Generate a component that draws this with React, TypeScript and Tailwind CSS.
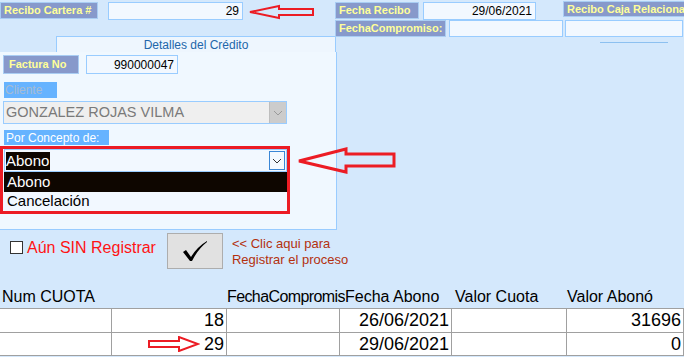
import React from "react";

const font = { fontFamily: '"Liberation Sans", Arial, sans-serif' };

function Label({ text, className }: { text: string; className: string }) {
  return (
    <div
      className={`flex items-center overflow-hidden whitespace-nowrap border border-[#a9cdf3] bg-[#8799cb] pl-[3px] text-[11px] font-bold text-[#ffff99] ${className}`}
    >
      {text}
    </div>
  );
}

function Input({ value, className }: { value?: string; className: string }) {
  return (
    <div
      className={`flex items-center justify-end border border-[#99ccff] bg-[#f2f8ff] pr-[3px] text-[12px] text-black ${className}`}
    >
      {value}
    </div>
  );
}

function Chevron({ color }: { color: string }) {
  return (
    <svg width="10" height="6" viewBox="0 0 10 6">
      <path d="M1 1 L5 5 L9 1" fill="none" stroke={color} strokeWidth="1" />
    </svg>
  );
}

function Cell({ children, w }: { children?: React.ReactNode; w: string }) {
  return (
    <div
      className={`flex h-full items-center justify-end border-r border-[#a0a0a0] pr-[2px] ${w}`}
    >
      {children}
    </div>
  );
}

export default function App() {
  return (
    <div
      className="relative h-[357px] w-[684px] overflow-hidden bg-[#d4e8fc]"
      style={font}
    >
      {/* top strip */}
      <div className="flex">
        <div className="w-[335px] shrink-0">
          <div className="flex items-start pt-[2px]">
            <Label text="Recibo Cartera #" className="h-[17px] w-[98px]" />
            <Input value="29" className="ml-[10px] h-[18px] w-[135px]" />
            <svg width="66" height="16" viewBox="0 0 66 16" className="ml-[6px] mt-[2px]">
              <path
                d="M1 8 L30 2 L30 5 L64 5 L64 11 L30 11 L30 14 Z"
                fill="none"
                stroke="#ec1c24"
                strokeWidth="2"
              />
            </svg>
          </div>
          <div className="ml-[56px] mt-[16px] flex h-[16px] w-[280px] items-center justify-center border border-b-0 border-[#99ccff] bg-[#eef6fe] text-[12px] text-[#2266aa]">
            Detalles del Crédito
          </div>
        </div>
        <div className="flex-1">
          <div className="flex items-start">
            <Label text="Fecha Recibo" className="mt-[2px] h-[17px] w-[84px]" />
            <Input value="29/06/2021" className="ml-[4px] mt-[2px] h-[18px] w-[113px]" />
            <Label text="Recibo Caja Relacionado" className="ml-[27px] mt-[1px] h-[16px] w-[130px] shrink-0" />
          </div>
          <div className="flex items-start">
            <Label text="FechaCompromiso:" className="h-[17px] w-[111px]" />
            <Input className="ml-[3px] h-[17px] w-[114px]" />
            <Input className="ml-[2px] h-[17px] w-[118px]" />
          </div>
          <div className="ml-[265px] mt-[5px] h-px w-[68px] bg-[#8cc0f0]" />
        </div>
      </div>

      {/* credit details panel */}
      <div className="h-[178px] w-[337px] border-r border-b border-[#99ccff] bg-[#f0f8ff]">
        <div className="flex items-start pl-[3px] pt-[3px]">
          <Label text="Factura No" className="h-[19px] w-[76px] pl-[5px]" />
          <Input value="990000047" className="ml-[7px] h-[19px] w-[92px]" />
        </div>
        <div className="ml-[4px] mt-[8px] flex h-[16px] w-[53px] items-center bg-[#66b3ff] pl-[1px] text-[12px] text-[#a6bcd2]">
          Cliente
        </div>
        <div className="ml-[3px] mt-[3px] flex h-[23px] w-[284px] items-center border border-[#99ccff] bg-[#efefef]">
          <span className="flex-1 pl-[2px] text-[14.5px] text-[#7a7a7a]">
            GONZALEZ ROJAS VILMA
          </span>
          <div className="flex h-full w-[17px] items-center justify-center border-l border-[#bdbdbd] bg-[#cccccc]">
            <Chevron color="#9a9a9a" />
          </div>
        </div>
        <div className="ml-[4px] mt-[6px] flex h-[15px] w-[105px] items-center bg-[#66b3ff] pl-[2px] text-[12px] text-white">
          Por Concepto de:
        </div>
        <div className="mt-[1px] h-[68px] w-[290px] border-[3px] border-[#ec1c24] pl-px">
          <div className="flex h-[23px] w-[283px] items-center border border-[#99ccff] bg-[#f2f8ff]">
            <span className="ml-[1px] bg-[#0e0600] pr-[1px] text-[15px] leading-[18px] text-white">
              Abono
            </span>
            <div className="flex-1" />
            <div className="mr-px flex h-[19px] w-[16px] items-center justify-center border border-[#3a86d6] bg-[#f4f9ff]">
              <Chevron color="#333333" />
            </div>
          </div>
          <div className="w-[283px] bg-[#f2f8ff] text-[15px]">
            <div className="flex h-[20px] items-center bg-[#0e0600] pl-[3px] text-white">Abono</div>
            <div className="flex h-[19px] items-center pl-[3px] text-black">Cancelación</div>
          </div>
        </div>
      </div>

      {/* register row */}
      <div className="mt-[3px] flex items-start">
        <div className="ml-[10px] mt-[8px] h-[13px] w-[13px] border border-[#333333] bg-white" />
        <span className="ml-[4px] mt-[3px] text-[16px] text-[#ff1414]">Aún SIN Registrar</span>
        <button className="ml-[11px] flex h-[36px] w-[56px] items-center justify-center border border-[#adadad] bg-[#e1e1e1]">
          <svg width="26" height="22" viewBox="0 0 26 22">
            <path
              d="M1 12 L4 10 L9 17 Q15 7 25 1 L25 2 Q16 9 10 21 L8 21 Z"
              fill="#000"
            />
          </svg>
        </button>
        <div className="ml-[9px] mt-[3px] text-[13px] leading-[16px] text-[#b3300e]">
          <div>&lt;&lt; Clic aqui para</div>
          <div>Registrar el proceso</div>
        </div>
      </div>

      {/* grid header */}
      <div className="mt-[16px] flex h-[23px] items-center whitespace-nowrap text-[16px] text-black">
        <div className="w-[227px] pl-[2px]">Num CUOTA</div>
        <div className="w-[118px] overflow-hidden tracking-[-0.6px]">FechaCompromiso</div>
        <div className="w-[110px]">Fecha Abono</div>
        <div className="w-[112px]">Valor Cuota</div>
        <div className="flex-1">Valor Abonó</div>
      </div>

      {/* grid rows */}
      <div className="border-t border-[#a0a0a0] bg-white text-[18px] text-black">
        <div className="flex h-[24px] border-b border-[#a0a0a0]">
          <Cell w="w-[112px]" />
          <Cell w="w-[115px]">18</Cell>
          <Cell w="w-[113px]" />
          <Cell w="w-[112px]">26/06/2021</Cell>
          <Cell w="w-[115px]" />
          <Cell w="flex-1">31696</Cell>
        </div>
        <div className="flex h-[23px] border-b border-[#a0a0a0]">
          <Cell w="w-[112px]" />
          <Cell w="w-[115px]">
            <svg width="52" height="16" viewBox="0 0 52 16" className="mr-[4px]">
              <path
                d="M1 5 L31 5 L31 1 L50 8 L31 15 L31 11 L1 11 Z"
                fill="none"
                stroke="#ec1c24"
                strokeWidth="2"
              />
            </svg>
            29
          </Cell>
          <Cell w="w-[113px]" />
          <Cell w="w-[112px]">29/06/2021</Cell>
          <Cell w="w-[115px]" />
          <Cell w="flex-1">0</Cell>
        </div>
      </div>

      {/* annotation arrow pointing at the concept combo */}
      <svg
        width="100"
        height="28"
        viewBox="0 0 100 28"
        className="absolute left-[297px] top-[146px]"
      >
        <path
          d="M2 15 L49 3 L49 8 L97 8 L97 20 L49 20 L49 26 Z"
          fill="none"
          stroke="#ec1c24"
          strokeWidth="3"
        />
      </svg>
    </div>
  );
}
